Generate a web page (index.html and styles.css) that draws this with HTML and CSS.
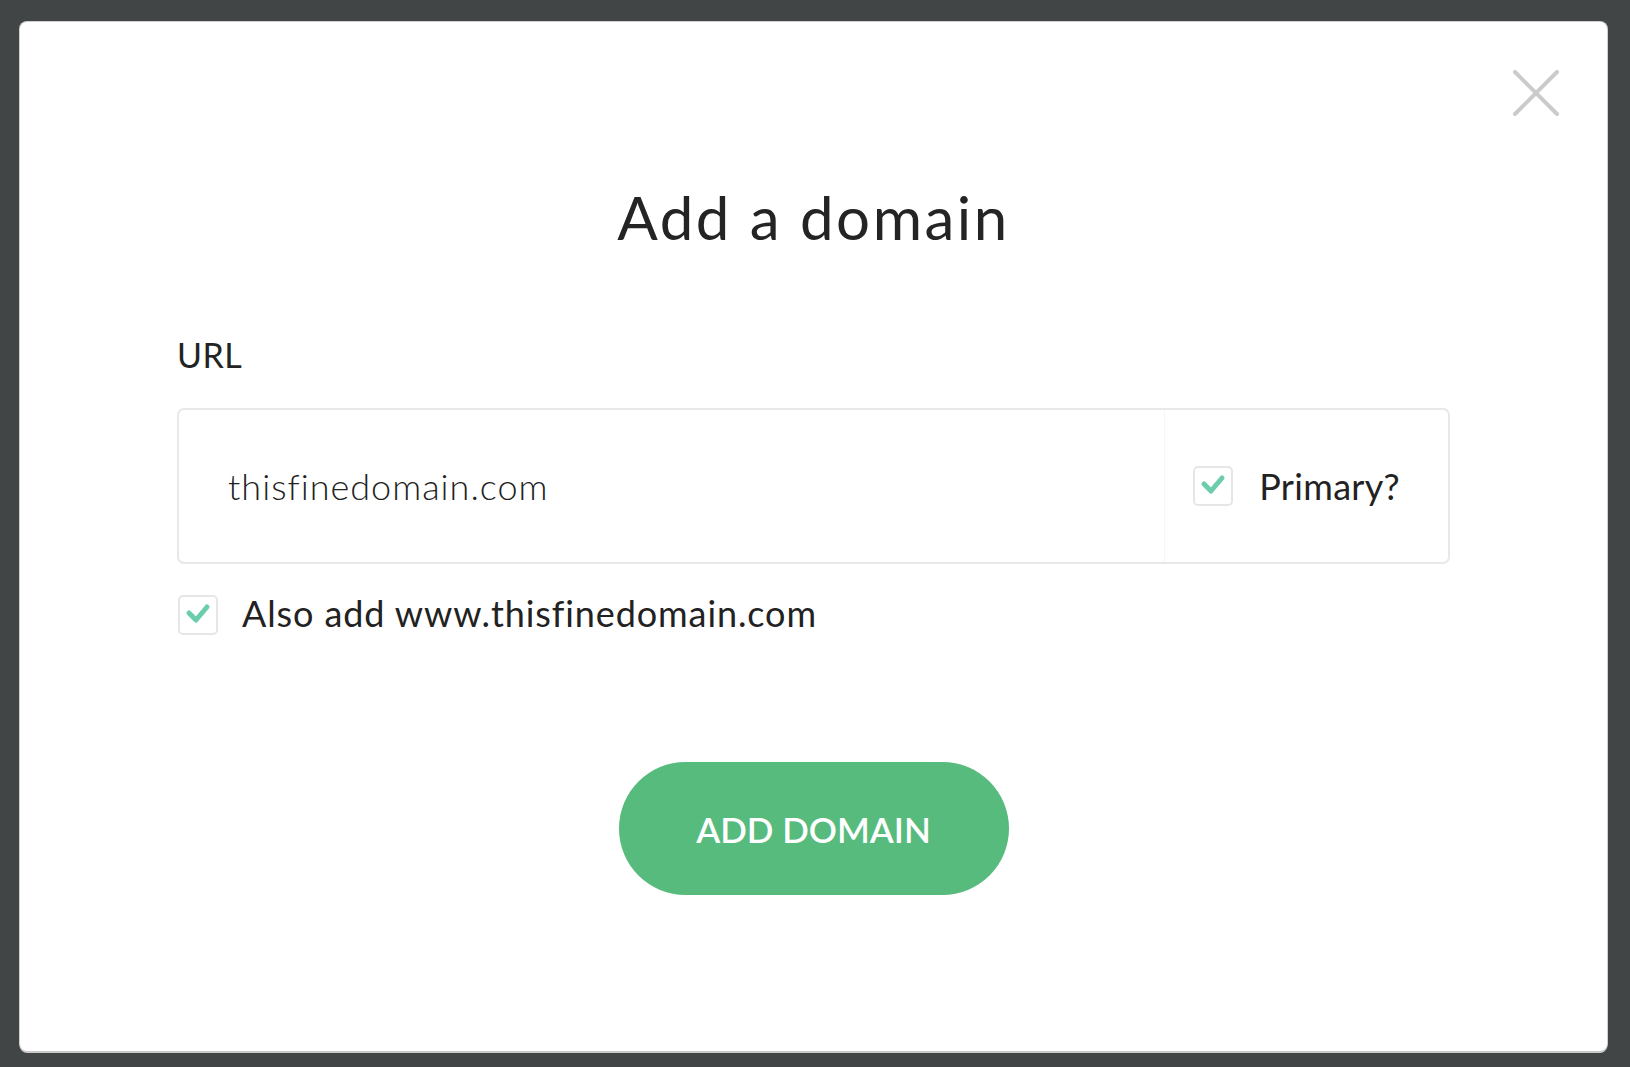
FILE: index.html
```html
<!DOCTYPE html>
<html lang="en">
<head>
<meta charset="utf-8">
<title>Add a domain</title>
<link rel="stylesheet" href="styles.css">
</head>
<body>
<div class="modal">
  <button class="close" aria-label="Close">
    <svg width="46" height="46" viewBox="0 0 46 46"><path d="M2 2L44 44M44 2L2 44" stroke="#cbcbcb" stroke-width="4" stroke-linecap="round" fill="none"/></svg>
  </button>
  <h1 class="title">Add a domain</h1>
  <form class="form">
    <label class="url-label">URL</label>
    <div class="url-field">
      <span class="url-text">thisfinedomain.com</span>
      <div class="primary">
        <span class="checkbox">
          <svg width="36" height="36" viewBox="0 0 36 36"><path d="M9 16L16 23L27 10" stroke="#6ccdac" stroke-width="5" stroke-linecap="round" stroke-linejoin="round" fill="none"/></svg>
        </span>
        <span class="primary-label">Primary?</span>
      </div>
    </div>
    <div class="also">
      <span class="checkbox">
        <svg width="36" height="36" viewBox="0 0 36 36"><path d="M9 16L16 23L27 10" stroke="#6ccdac" stroke-width="5" stroke-linecap="round" stroke-linejoin="round" fill="none"/></svg>
      </span>
      <span class="also-label">Also add www.thisfinedomain.com</span>
    </div>
    <div class="actions">
      <button type="button" class="submit">ADD DOMAIN</button>
    </div>
  </form>
</div>
</body>
</html>
```

FILE: styles.css
```css
html, body {
  margin: 0;
  padding: 0;
  height: 100%;
}
body {
  background: #424546;
  font-family: Lato, "Open Sans", sans-serif;
  color: #232323;
  overflow: hidden;
}
.modal {
  position: relative;
  box-sizing: border-box;
  margin: 22px 0 0 20px;
  width: 1587px;
  height: 1029px;
  background: #fff;
  border-radius: 7px;
  box-shadow: 0 2px 0 #c9c9c9, 0 0 0 1px #cfcfcf;
  padding: 159px 157px 0 157px;
}
.close {
  position: absolute;
  top: 48px;
  right: 48px;
  width: 46px;
  height: 46px;
  padding: 0;
  border: 0;
  background: none;
  cursor: pointer;
}
.close svg { display: block; }
.title {
  margin: 0;
  text-align: center;
  font-size: 60px;
  line-height: 72px;
  font-weight: 400;
  letter-spacing: 2.5px;
  color: #242424;
}
.form {
  display: flex;
  flex-direction: column;
}
.url-label {
  margin-top: 82px;
  font-size: 34px;
  line-height: 40px;
  letter-spacing: 0.5px;
}
.url-field {
  margin-top: 33px;
  box-sizing: border-box;
  height: 156px;
  border: 2px solid #e8e8e8;
  border-radius: 7px;
  display: flex;
  align-items: stretch;
}
.url-text {
  flex: 1;
  display: flex;
  align-items: center;
  padding-left: 49px;
  font-size: 36px;
  font-weight: 300;
  letter-spacing: 1px;
  color: #222;
}
.primary {
  display: flex;
  align-items: center;
  border-left: 1px solid #f6f6f6;
  padding-left: 28px;
  padding-right: 48px;
}
.checkbox {
  box-sizing: border-box;
  width: 40px;
  height: 40px;
  border: 2px solid #e6e6e6;
  border-radius: 5px;
  flex: none;
}
.checkbox svg { display: block; }
.primary-label {
  margin-left: 26px;
  font-size: 36px;
  letter-spacing: 0.3px;
  color: #222;
}
.also {
  margin-top: 31px;
  display: flex;
  align-items: center;
  padding-left: 1px;
}
.also-label {
  margin-left: 24px;
  margin-bottom: 4px;
  font-size: 36px;
  line-height: 36px;
  letter-spacing: 0.9px;
  color: #222;
}
.actions {
  display: flex;
  justify-content: center;
  margin-top: 127px;
}
.submit {
  width: 390px;
  height: 133px;
  border: 0;
  border-radius: 67px;
  background: #57bb7e;
  color: #fff;
  font-family: Lato, "Open Sans", sans-serif;
  font-size: 35px;
  font-weight: 600;
  letter-spacing: 0;
  padding: 0;
  cursor: pointer;
}
```
